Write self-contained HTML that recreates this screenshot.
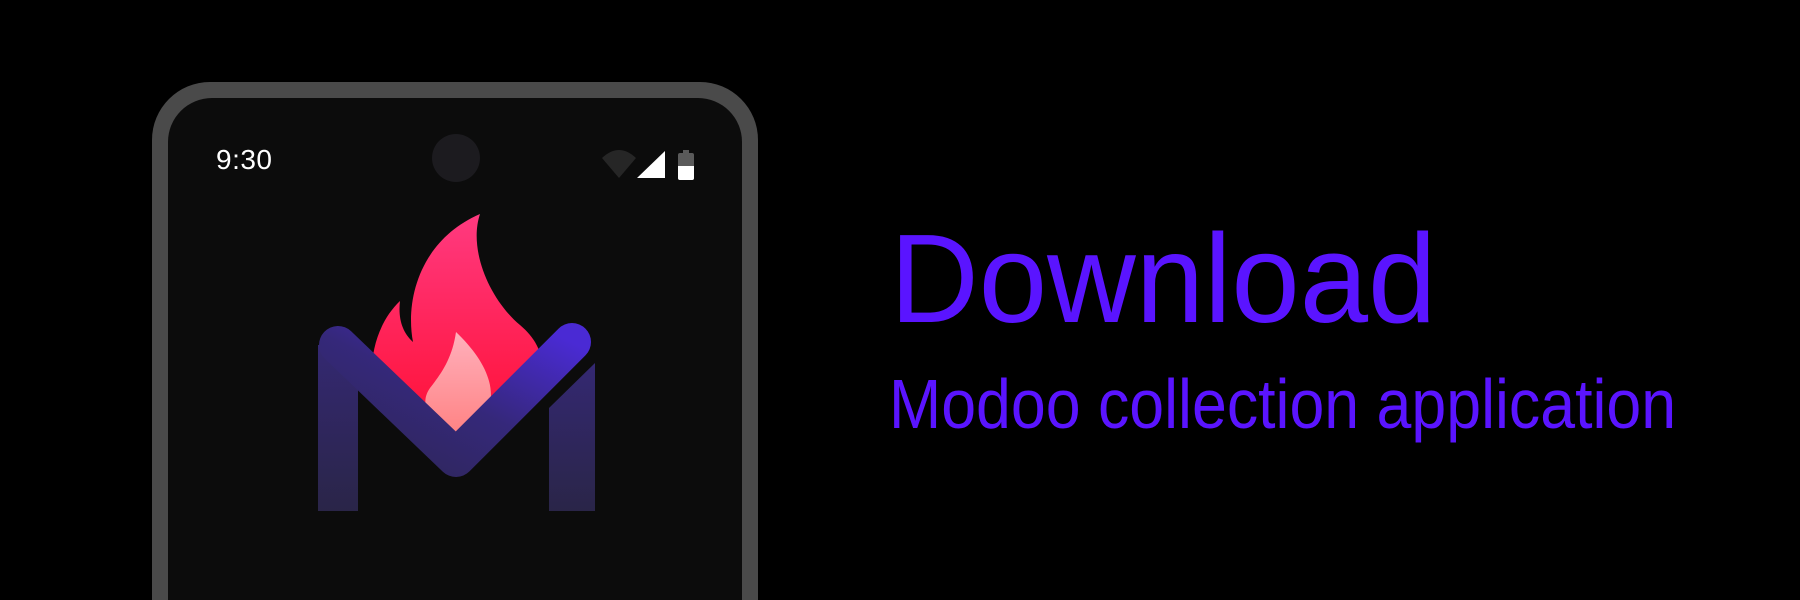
<!DOCTYPE html>
<html><head><meta charset="utf-8"><style>
html,body{margin:0;padding:0;background:#000;width:1800px;height:600px;overflow:hidden;position:relative;font-family:"Liberation Sans",sans-serif}
.phone{position:absolute;left:152px;top:82px;width:606px;height:518px;background:#4a4a4a;border-radius:58px 58px 0 0;overflow:hidden}
.screen{position:absolute;left:16px;top:16px;width:574px;height:502px;background:#0c0c0c;border-radius:44px 44px 0 0}
.time{position:absolute;left:216px;top:145px;color:#fff;font-size:28px;line-height:30px;letter-spacing:0.5px}
.t{position:absolute;color:#5a14ff;white-space:nowrap;transform-origin:0 0}
</style></head><body>
<div class="phone"><div class="screen"></div></div>
<div class="time">9:30</div>
<svg width="1800" height="600" style="position:absolute;left:0;top:0">
<defs>
<linearGradient id="fl" x1="0" y1="0" x2="0" y2="1"><stop offset="0" stop-color="#ff3a80"/><stop offset="1" stop-color="#ff0a2c"/></linearGradient>
<linearGradient id="in" x1="0" y1="0" x2="0" y2="1"><stop offset="0" stop-color="#ffb0bc"/><stop offset="1" stop-color="#ff8080"/></linearGradient>
<linearGradient id="mg" x1="0" y1="1" x2="1" y2="0"><stop offset="0" stop-color="#2e2658"/><stop offset="0.5" stop-color="#35287a"/><stop offset="1" stop-color="#4a2ad4"/></linearGradient>
<linearGradient id="bar" x1="0" y1="0" x2="0" y2="1"><stop offset="0" stop-color="#342872"/><stop offset="1" stop-color="#2a2548"/></linearGradient>
</defs>
<circle cx="456" cy="158" r="24" fill="#1c1b1f"/>
<path d="M602,158 Q619,142 636,158 L619,178 Z" fill="#262626"/>
<path d="M637,178 L665,151 L665,178 Z" fill="#fff"/>
<rect x="683" y="150" width="6" height="4" fill="#5a5a5a"/>
<rect x="678" y="153" width="16" height="27" rx="2" fill="#5a5a5a"/>
<path d="M678,166 H694 V178 Q694,180 692,180 H680 Q678,180 678,178 Z" fill="#fff"/>
<path d="M480,214 C468,250 490,300 520,325 C540,342 545,360 540,380 L456,460 L372,380 C370,350 380,320 400,301 C398,318 402,332 413,342 C405,300 420,240 480,214 Z" fill="url(#fl)"/>
<path d="M456,332 C452,360 440,375 430,388 C420,402 425,420 456,440 L490,405 C495,380 480,355 456,332 Z" fill="url(#in)"/>
<rect x="318" y="345" width="40" height="166" fill="url(#bar)"/>
<path d="M338,345 L456,458 L572,342" fill="none" stroke="url(#mg)" stroke-width="38" stroke-linecap="round" stroke-linejoin="round"/>
<path d="M549,408 L595,363 L595,511 L549,511 Z" fill="url(#bar)"/>
</svg>
<div class="t" style="left:890px;top:209px;font-size:126px;line-height:140px;transform:scaleX(0.975)">Download</div>
<div class="t" style="left:889px;top:364px;font-size:70px;line-height:80px;transform:scaleX(0.895)">Modoo collection application</div>
</body></html>
